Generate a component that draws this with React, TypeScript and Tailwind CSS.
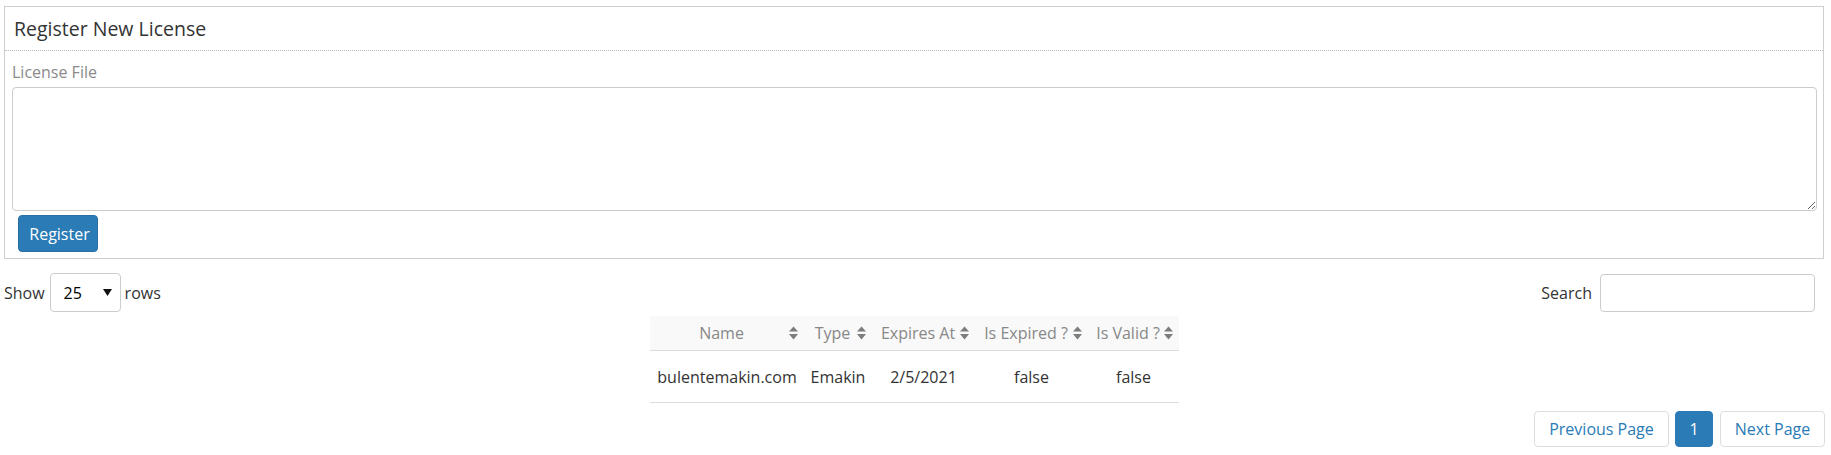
import React from "react"

const font = { fontFamily: '"Open Sans", "Liberation Sans", sans-serif' }

type Col = { label: string; width: string }

const columns: Col[] = [
  { label: "Name", width: "w-[154px]" },
  { label: "Type", width: "w-[68px]" },
  { label: "Expires At", width: "w-[103px]" },
  { label: "Is Expired ?", width: "w-[113px]" },
  { label: "Is Valid ?", width: "w-[91px]" },
]

const rows = [["bulentemakin.com", "Emakin", "2/5/2021", "false", "false"]]

function SortIcon() {
  return (
    <svg width="9" height="14" viewBox="0 0 9 14" className="shrink-0">
      <polygon points="0,5.5 4.5,0.5 9,5.5" fill="#7d7d7d" />
      <polygon points="0,8 9,8 4.5,13.5" fill="#7d7d7d" />
    </svg>
  )
}

function LicensePanel() {
  return (
    <div className="ml-[4px] mr-[7px] mt-[6px] border border-[#cfcfcf] bg-white">
      <div className="flex h-[44px] items-center border-b border-dotted border-[#bdbdbd] px-[9px] text-[19.5px] text-[#333]">
        Register New License
      </div>
      <div className="pb-[6px] pl-[7px] pr-[6px] pt-[10px]">
        <div className="text-[16px] leading-[22px] text-[#8a8a8a]">License File</div>
        <textarea className="mt-[4px] block h-[124px] w-full rounded-[4px] border border-[#cccccc] outline-none" />
        <button className="ml-[6px] mt-[4px] flex h-[37px] w-[80px] items-center justify-center rounded-[4px] border border-[#2a6fa3] bg-[#2a7bb6] pl-[3px] text-[16px] text-white">
          Register
        </button>
      </div>
    </div>
  )
}

function Toolbar() {
  return (
    <div className="mt-[14px] flex items-center justify-between pl-[4px] pr-[16px] text-[16px] text-[#333]">
      <div className="flex items-center">
        <span>Show</span>
        <div className="ml-[5px] mr-[4px] flex h-[39px] w-[71px] items-center justify-between rounded-[4px] border border-[#cccccc] pl-[13px] pr-[8px] text-black">
          <span>25</span>
          <svg width="9" height="7" viewBox="0 0 9 7">
            <polygon points="0,0 9,0 4.5,7" fill="#111" />
          </svg>
        </div>
        <span>rows</span>
      </div>
      <div className="flex items-center">
        <span>Search</span>
        <input className="ml-[8px] h-[38px] w-[215px] rounded-[4px] border border-[#cccccc] outline-none" />
      </div>
    </div>
  )
}

function LicenseTable() {
  return (
    <div className="ml-[650px] mt-[4px] w-[529px] text-[16px]">
      <div className="flex h-[35px] border-b border-[#dddddd] bg-[#f9f9f9] text-[#888]">
        {columns.map((c) => (
          <div key={c.label} className={`${c.width} flex items-center pl-[8px] pr-[6px]`}>
            <span className="flex-1 pr-[4px] text-center whitespace-nowrap">{c.label}</span>
            <SortIcon />
          </div>
        ))}
      </div>
      {rows.map((r, i) => (
        <div key={i} className="flex h-[52px] border-b border-[#dddddd] text-[#333]">
          {r.map((v, j) => (
            <div key={j} className={`${columns[j].width} flex items-center justify-center whitespace-nowrap`}>
              {v}
            </div>
          ))}
        </div>
      ))}
    </div>
  )
}

function Pager() {
  return (
    <div className="mt-[8px] flex justify-end gap-[6px] pr-[6px] text-[16px]">
      <button className="flex h-[36px] w-[135px] items-center justify-center rounded-[4px] border border-[#dddddd] text-[#2a7bb6]">
        Previous Page
      </button>
      <button className="flex h-[36px] w-[38px] items-center justify-center rounded-[4px] border border-[#2a7bb6] bg-[#2a7bb6] text-white">
        1
      </button>
      <button className="ml-[1px] flex h-[36px] w-[105px] items-center justify-center rounded-[4px] border border-[#dddddd] text-[#2a7bb6]">
        Next Page
      </button>
    </div>
  )
}

export default function App() {
  return (
    <div className="min-h-[455px] w-[1831px] bg-white" style={font}>
      <LicensePanel />
      <Toolbar />
      <LicenseTable />
      <Pager />
    </div>
  )
}
